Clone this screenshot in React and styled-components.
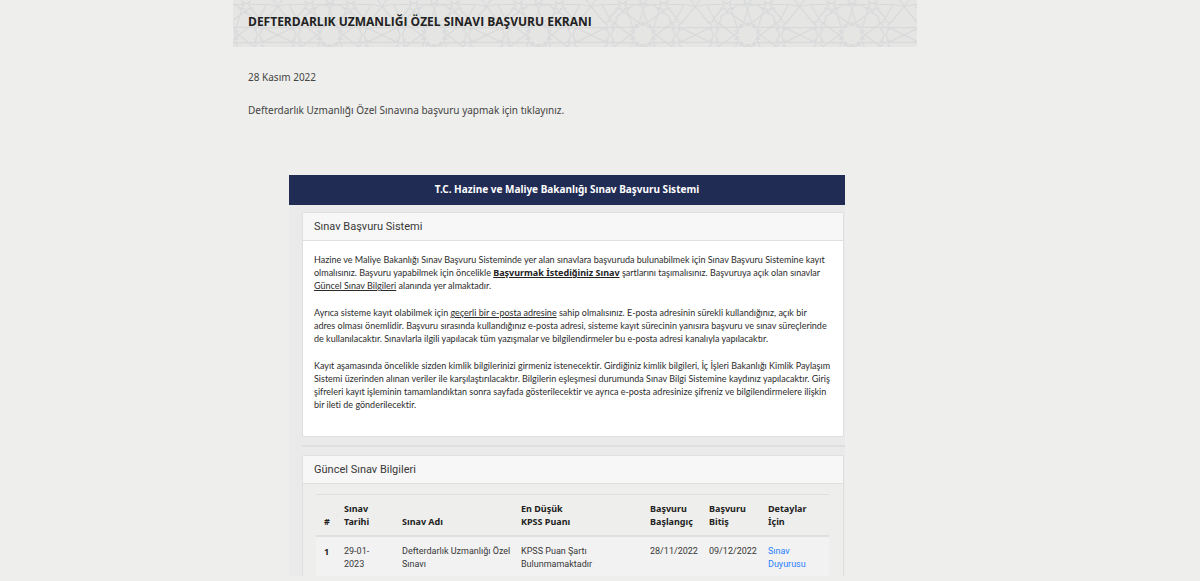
import React from 'react'
import styled, { createGlobalStyle } from 'styled-components'

const navy = '#212c55'
const line = '#dfdfe0'
const boldFont = '"Noto Sans", sans-serif'

const GlobalStyle = createGlobalStyle`
  * {
    box-sizing: border-box;
  }

  body {
    margin: 0;
    background: #eeeeec;
    color: #444;
    font-family: "Noto Sans", sans-serif;
    font-size: 10px;
  }
`

const Page = styled.main`
  width: 57%;
  margin-left: 233px;
`

const TitleBar = styled.header`
  display: grid;
  background: #e5e5e3;
  overflow: hidden;

  > * {
    grid-area: 1 / 1;
  }
`

const Pattern = styled.svg`
  display: block;
  width: 100%;
  height: 47px;
`

const Title = styled.h1`
  margin: 0;
  padding: 12px 15px;
  color: #222;
  font-family: "Open Sans", sans-serif;
  font-size: 12px;
  line-height: 20px;
  font-weight: 700;
`

const Intro = styled.section`
  padding: 21px 15px 56px;

  p {
    margin: 0 0 15px;
    line-height: 18px;
  }

  p:last-child {
    margin: 0;
  }
`

const System = styled.section`
  margin: 0 72px 0 56px;
  background: #eaeaea;
  color: #383838;
  font-family: Roboto, sans-serif;
  font-size: 9px;
  line-height: 13px;

  b, th {
    color: #222;
    font-family: ${boldFont};
    font-weight: 700;
  }
`

const Banner = styled.h2`
  margin: 0 0 7px;
  padding: 7px 0 9px;
  background: ${navy};
  color: #fff;
  font-family: ${boldFont};
  font-size: 10px;
  line-height: 14px;
  text-align: center;
`

const Card = styled.section`
  margin: 0 1px 0 13px;
  border: 1px solid ${line};
  border-bottom-width: ${props => props.$open ? '0' : '1px'};
  border-radius: ${props => props.$open ? '2px 2px 0 0' : '2px'};
  background: ${props => props.$open ? '#eeeeec' : '#fff'};
`

const CardTitle = styled.h3`
  margin: 0;
  padding: 5px 11px;
  border-bottom: 1px solid ${line};
  background: #f7f7f7;
  font-size: 11px;
  line-height: 17px;
  font-weight: normal;
`

const CardText = styled.div`
  padding: 12px 0 11px 11px;
  color: #2c2c2c;
  font-family: Lato, sans-serif;
  font-variant-ligatures: none;
  white-space: nowrap;

  p {
    margin: 0 0 14px;
  }
`

const Divider = styled.hr`
  margin: 8px 0 8px 13px;
  border: 0;
  border-top: 2px solid ${line};
`

const TableWrap = styled.div`
  padding: 10px 14px 0 13px;
`

const Table = styled.table`
  width: 100%;
  border-collapse: collapse;
  table-layout: fixed;
  text-align: left;
  white-space: pre;

  th, td {
    padding: 8px 0 5px 8px;
    vertical-align: top;
  }

  thead th {
    padding: 7px 0 7px 8px;
    border-top: 1px solid ${line};
    border-bottom: 2px solid ${line};
    vertical-align: bottom;
  }

  tbody tr {
    background: #f2f2f2;
  }
`

const Col = styled.col`
  width: ${props => props.$w};
`

const Link = styled.a`
  color: #2a7fff;
  text-decoration: none;
`

const columns = [
  { label: '#', width: '20px' },
  { label: 'Sınav\nTarihi', width: '58px' },
  { label: 'Sınav Adı', width: '119px' },
  { label: 'En Düşük\nKPSS Puanı', width: '129px' },
  { label: 'Başvuru\nBaşlangıç', width: '59px' },
  { label: 'Başvuru\nBitiş', width: '59px' },
  { label: 'Detaylar\nİçin', width: 'auto' }
]

const exams = [
  {
    id: 1,
    date: '29-01-\n2023',
    name: 'Defterdarlık Uzmanlığı Özel\nSınavı',
    score: 'KPSS Puan Şartı\nBulunmamaktadır',
    start: '28/11/2022',
    end: '09/12/2022',
    link: 'Sınav\nDuyurusu'
  }
]

const turns = [0, 36, 72, 108, 144, 180, 216, 252, 288, 324]

// ten-fold rosettes repeated along the bar, joined by the lattice between them
const Rosettes = () => (
  <Pattern aria-hidden="true">
    <defs>
      <pattern id="rosette" x="-59.7" y="0" width="104.4" height="70" patternUnits="userSpaceOnUse">
        <g transform="translate(52.2 35)" fill="none" stroke="#d8d9da" strokeWidth="1.2">
          {turns.map(turn => (
            <g key={turn} transform={`rotate(${turn})`}>
              <path d="M9 -2.9 L10.5 -7.6 H29 L32 0 L29 7.6 H10.5 L9 2.9" />
              <path d="M6 -1.9 L10 0 L6 1.9" transform="rotate(18) translate(3 0)" />
              <path
                transform="rotate(-18) translate(35 0)"
                d="M6.5 0 L2.2 1.6 L2 6.2 L-.8 2.5 L-5.3 3.8 L-2.6 0 L-5.3 -3.8 L-.8 -2.5 L2 -6.2 L2.2 -1.6 Z"
              />
            </g>
          ))}
          {[1, -1].map(side => (
            <g key={side} transform={`scale(${side} 1)`}>
              <path d="M37 -7.4 H52.2 M37 7.4 H52.2" />
              <path d="M37 -7.4 L34 0 L37 7.4" />
              <path d="M37 -7.4 L52.2 0 L37 7.4" />
              <path d="M39.5 -13 L52.2 -28.5 L47 -36" />
              <path d="M33 -17.5 L26 -25.5 M34 -17.5 L41 -30.5" />
              <path d="M24 -30.5 H43 L52.2 -28.5" />
              <path d="M0 -30.5 H17" />
            </g>
          ))}
        </g>
      </pattern>
    </defs>
    <rect width="100%" height="100%" fill="url(#rosette)" />
  </Pattern>
)

const App = () => (
  <Page>
    <GlobalStyle />
    <TitleBar>
      <Rosettes />
      <Title>DEFTERDARLIK UZMANLIĞI ÖZEL SINAVI BAŞVURU EKRANI</Title>
    </TitleBar>
    <Intro>
      <p>28 Kasım 2022</p>
      <p>Defterdarlık Uzmanlığı Özel Sınavına başvuru yapmak için tıklayınız.</p>
    </Intro>
    <System>
      <Banner>T.C. Hazine ve Maliye Bakanlığı Sınav Başvuru Sistemi</Banner>
      <Card>
        <CardTitle>Sınav Başvuru Sistemi</CardTitle>
        <CardText>
          <p>
            Hazine ve Maliye Bakanlığı Sınav Başvuru Sisteminde yer alan sınavlara başvuruda bulunabilmek için Sınav Başvuru Sistemine kayıt<br />
            olmalısınız. Başvuru yapabilmek için öncelikle <b><u>Başvurmak İstediğiniz Sınav</u></b> şartlarını taşımalısınız. Başvuruya açık olan sınavlar<br />
            <u>Güncel Sınav Bilgileri</u> alanında yer almaktadır.
          </p>
          <p>
            Ayrıca sisteme kayıt olabilmek için <u>geçerli bir e-posta adresine</u> sahip olmalısınız. E-posta adresinin sürekli kullandığınız, açık bir<br />
            adres olması önemlidir. Başvuru sırasında kullandığınız e-posta adresi, sisteme kayıt sürecinin yanısıra başvuru ve sınav süreçlerinde<br />
            de kullanılacaktır. Sınavlarla ilgili yapılacak tüm yazışmalar ve bilgilendirmeler bu e-posta adresi kanalıyla yapılacaktır.
          </p>
          <p>
            Kayıt aşamasında öncelikle sizden kimlik bilgilerinizi girmeniz istenecektir. Girdiğiniz kimlik bilgileri, İç İşleri Bakanlığı Kimlik Paylaşım<br />
            Sistemi üzerinden alınan veriler ile karşılaştırılacaktır. Bilgilerin eşleşmesi durumunda Sınav Bilgi Sistemine kaydınız yapılacaktır. Giriş<br />
            şifreleri kayıt işleminin tamamlandıktan sonra sayfada gösterilecektir ve ayrıca e-posta adresinize şifreniz ve bilgilendirmelere ilişkin<br />
            bir ileti de gönderilecektir.
          </p>
        </CardText>
      </Card>
      <Divider />
      <Card $open>
        <CardTitle>Güncel Sınav Bilgileri</CardTitle>
        <TableWrap>
          <Table>
            <colgroup>
              {columns.map(col => <Col key={col.label} $w={col.width} />)}
            </colgroup>
            <thead>
              <tr>
                {columns.map(col => <th key={col.label} scope="col">{col.label}</th>)}
              </tr>
            </thead>
            <tbody>
              {exams.map(exam => (
                <tr key={exam.id}>
                  <th scope="row">{exam.id}</th>
                  <td>{exam.date}</td>
                  <td>{exam.name}</td>
                  <td>{exam.score}</td>
                  <td>{exam.start}</td>
                  <td>{exam.end}</td>
                  <td><Link href="#duyuru">{exam.link}</Link></td>
                </tr>
              ))}
            </tbody>
          </Table>
        </TableWrap>
      </Card>
    </System>
  </Page>
)

export default App
